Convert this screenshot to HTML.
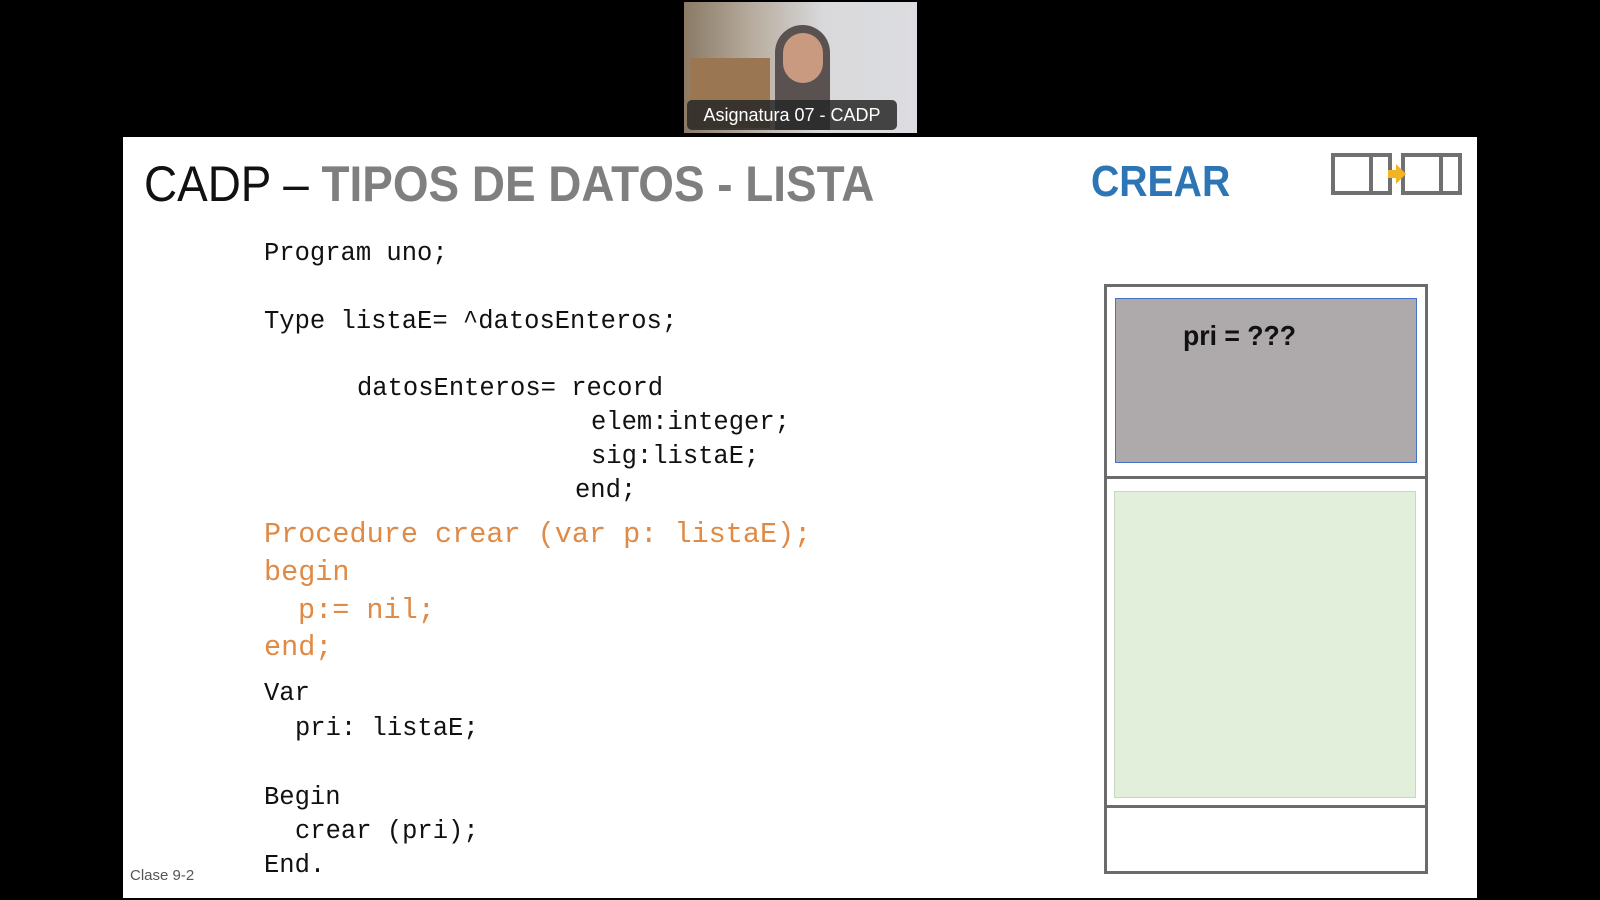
<!DOCTYPE html>
<html><head><style>
body{margin:0;width:1600px;height:900px;background:#000;position:relative;overflow:hidden;font-family:"Liberation Sans",sans-serif}
.a{position:absolute;white-space:pre}
.c{font-family:"Liberation Mono",monospace;font-size:25.5px;color:#111;line-height:1}
.o{font-family:"Liberation Mono",monospace;font-size:28.5px;color:#e08a45;line-height:1}
</style></head><body>
<div class="a" style="left:684px;top:2px;width:233px;height:131px;background:linear-gradient(90deg,#8a7a66 0,#b8ad9f 30%,#d9d9dc 60%,#dcdde0 100%)"></div>
<div class="a" style="left:690px;top:58px;width:80px;height:70px;background:#9a7652"></div>
<div class="a" style="left:775px;top:25px;width:55px;height:105px;background:#5a5250;border-radius:28px 28px 0 0"></div>
<div class="a" style="left:783px;top:33px;width:40px;height:50px;background:#c99a80;border-radius:20px"></div>
<div class="a" style="left:687px;top:100px;width:210px;height:30px;background:rgba(40,40,40,.85);border-radius:5px;color:#fff;font-size:18px;line-height:30px;text-align:center">Asignatura 07 - CADP</div>
<div class="a" style="left:123px;top:137px;width:1354px;height:761px;background:#fff"></div>
<div class="a" style="left:144px;top:155px;font-size:50px;color:#111;transform:scaleX(0.917);transform-origin:0 0">CADP – <b style="color:#7f7f7f">TIPOS DE DATOS - LISTA</b></div>
<div class="a" style="left:1091px;top:157px;font-size:44px;font-weight:bold;color:#2e75b6;transform:scaleX(0.89);transform-origin:0 0">CREAR</div>
<svg class="a" style="left:1328px;top:150px" width="140" height="48"><g fill="none" stroke="#707070" stroke-width="4"><rect x="5" y="5" width="57" height="38"/><line x1="43" y1="5" x2="43" y2="43"/><rect x="75" y="5" width="57" height="38"/><line x1="113" y1="5" x2="113" y2="43"/></g><path d="M60 20h8v-6l10 10-10 10v-6h-8z" fill="#f4b323"/></svg>
<div class="a" style="left:1104px;top:284px;width:318px;height:584px;border:3px solid #6b6b6b"></div>
<div class="a" style="left:1115px;top:298px;width:300px;height:163px;background:#aeaaab;border:1px solid #4472c4"></div>
<div class="a" style="left:1183px;top:320px;font-size:28px;font-weight:bold;color:#111;transform:scaleX(0.95);transform-origin:0 0">pri = ???</div>
<div class="a" style="left:1107px;top:476px;width:318px;height:3px;background:#6b6b6b"></div>
<div class="a" style="left:1114px;top:491px;width:300px;height:305px;background:#e2efda;border:1px solid #c8d8c0"></div>
<div class="a" style="left:1107px;top:805px;width:318px;height:3px;background:#6b6b6b"></div>
<div class="a c" style="left:264px;top:241px">Program uno;</div>
<div class="a c" style="left:264px;top:309px">Type listaE= ^datosEnteros;</div>
<div class="a c" style="left:357px;top:376px">datosEnteros= record</div>
<div class="a c" style="left:591px;top:410px">elem:integer;</div>
<div class="a c" style="left:591px;top:444px">sig:listaE;</div>
<div class="a c" style="left:575px;top:478px">end;</div>
<div class="a o" style="left:264px;top:521px">Procedure crear (var p: listaE);</div>
<div class="a o" style="left:264px;top:559px">begin</div>
<div class="a o" style="left:298px;top:597px">p:= nil;</div>
<div class="a o" style="left:264px;top:634px">end;</div>
<div class="a c" style="left:264px;top:681px">Var</div>
<div class="a c" style="left:295px;top:716px">pri: listaE;</div>
<div class="a c" style="left:264px;top:785px">Begin</div>
<div class="a c" style="left:295px;top:819px">crear (pri);</div>
<div class="a c" style="left:264px;top:853px">End.</div>
<div class="a" style="left:130px;top:867px;font-size:15px;color:#555">Clase 9-2</div>
</body></html>
